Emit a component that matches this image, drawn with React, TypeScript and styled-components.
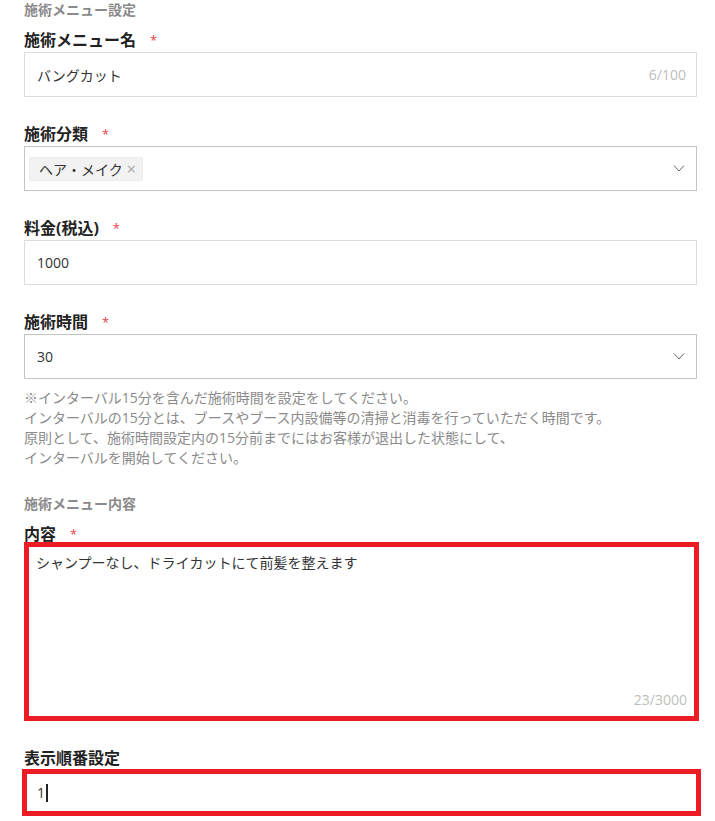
import React from "react";
import styled, { createGlobalStyle } from "styled-components";

const GlobalStyle = createGlobalStyle`
  body {
    margin: 0;
    background: #fff;
    font-family: "Open Sans", "Noto Sans CJK JP", sans-serif;
    color: #333;
  }
`;

const Page = styled.div`
  padding: 0 18px 0 24px;
`;

const SectionTitle = styled.h3`
  margin: 0 0 9px;
  font-size: 14px;
  line-height: 20px;
  font-weight: 700;
  color: #8a8a8a;
`;

const Field = styled.div`
  margin-bottom: 26px;
`;

const Label = styled.div`
  display: flex;
  align-items: center;
  margin: 0;
  font-size: 16px;
  line-height: 23px;
  font-weight: 700;
  color: #222;
`;

const Required = styled.span`
  margin-left: 14px;
  font-size: 13px;
  font-weight: 400;
  color: #e8404a;
`;

const Box = styled.div<{ $border?: string }>`
  display: flex;
  align-items: center;
  box-sizing: border-box;
  height: 45px;
  padding: 0 10px 0 12px;
  border: 1px solid ${(p) => p.$border ?? "#dcdcdc"};
  background: #fff;
  font-size: 14px;
  color: #333;
`;

const Value = styled.span`
  flex: 1;
`;

const Counter = styled.span`
  font-size: 14px;
  line-height: 20px;
  color: #bdbdbd;
`;

const SelectBox = styled(Box)<{ $tight?: boolean }>`
  padding: 0 11px 0 ${(p) => (p.$tight ? "4px" : "12px")};
`;

const Tag = styled.span`
  display: inline-flex;
  align-items: center;
  gap: 4px;
  height: 24px;
  box-sizing: border-box;
  padding: 0 6px 0 9px;
  background: #f2f2f2;
  border: 1px solid #ececec;
  border-radius: 2px;
  font-size: 14px;
  color: #333;
`;

const TagClose = styled.span`
  font-size: 16px;
  line-height: 1;
  color: #a6a6a6;
`;

const Help = styled.p`
  margin: 9px 0 0;
  font-size: 14px;
  line-height: 20px;
  color: #8a8a8a;
`;

const MARK = "#ec1c24";

const TextAreaBox = styled.div`
  display: flex;
  flex-direction: column;
  box-sizing: border-box;
  width: calc(100% + 2px);
  height: 179px;
  margin-top: -4px;
  padding: 6px 7px;
  border: 5px solid ${MARK};
  font-size: 14px;
  line-height: 20px;
  color: #333;
`;

const TextAreaValue = styled.div`
  flex: 1;
`;

const TextAreaCounter = styled(Counter)`
  align-self: flex-end;
`;

const OrderBox = styled.div`
  display: flex;
  align-items: center;
  box-sizing: border-box;
  height: 47px;
  margin: -1px -4px 0 -2px;
  padding: 0 10px;
  border: 5px solid ${MARK};
  font-size: 14px;
  color: #333;
`;

const Caret = styled.span`
  display: inline-block;
  width: 2px;
  height: 18px;
  margin-left: 1px;
  background: #222;
`;

const Chevron = () => (
  <svg width="12" height="7" viewBox="0 0 12 7">
    <polyline points="1,0.5 6,6 11,0.5" fill="none" stroke="#666" strokeWidth="1" />
  </svg>
);

const FieldLabel = ({ text, required }: { text: string; required?: boolean }) => (
  <Label>
    {text}
    {required && <Required>*</Required>}
  </Label>
);

export default function App() {
  return (
    <Page>
      <GlobalStyle />
      <SectionTitle>施術メニュー設定</SectionTitle>

      <Field>
        <FieldLabel text="施術メニュー名" required />
        <Box>
          <Value>バングカット</Value>
          <Counter>6/100</Counter>
        </Box>
      </Field>

      <Field>
        <FieldLabel text="施術分類" required />
        <SelectBox $border="#c4c4c4" $tight>
          <Value>
            <Tag>
              ヘア・メイク<TagClose>×</TagClose>
            </Tag>
          </Value>
          <Chevron />
        </SelectBox>
      </Field>

      <Field>
        <FieldLabel text="料金(税込)" required />
        <Box>
          <Value>1000</Value>
        </Box>
      </Field>

      <Field>
        <FieldLabel text="施術時間" required />
        <SelectBox $border="#c4c4c4">
          <Value>30</Value>
          <Chevron />
        </SelectBox>
        <Help>
          ※インターバル15分を含んだ施術時間を設定をしてください。
          <br />
          インターバルの15分とは、ブースやブース内設備等の清掃と消毒を行っていただく時間です。
          <br />
          原則として、施術時間設定内の15分前までにはお客様が退出した状態にして、
          <br />
          インターバルを開始してください。
        </Help>
      </Field>

      <SectionTitle>施術メニュー内容</SectionTitle>

      <Field>
        <FieldLabel text="内容" required />
        <TextAreaBox>
          <TextAreaValue>シャンプーなし、ドライカットにて前髪を整えます</TextAreaValue>
          <TextAreaCounter>23/3000</TextAreaCounter>
        </TextAreaBox>
      </Field>

      <Field>
        <FieldLabel text="表示順番設定" />
        <OrderBox>
          1<Caret />
        </OrderBox>
      </Field>
    </Page>
  );
}
